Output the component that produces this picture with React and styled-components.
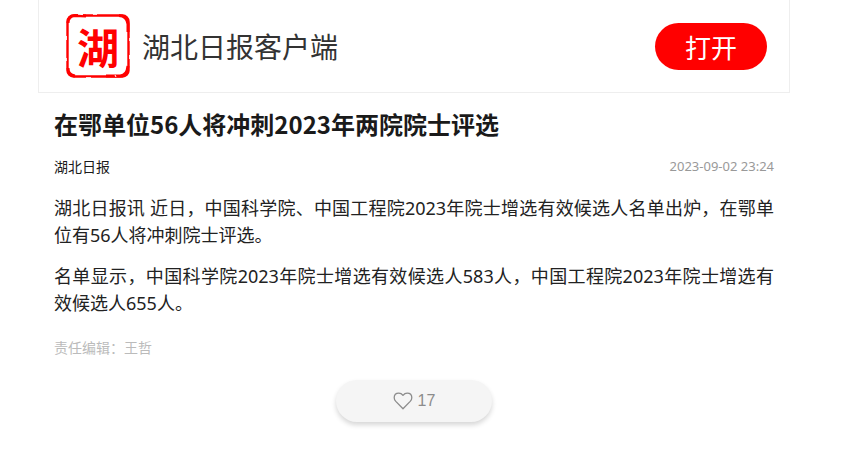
import React, { Component } from 'react';
import styled, { createGlobalStyle } from 'styled-components';

const article = {
	title: '在鄂单位56人将冲刺2023年两院院士评选',
	source: '湖北日报',
	date: '2023-09-02 23:24',
	editor: '责任编辑：王哲',
	likes: 17,
	paragraphs: [
		'湖北日报讯 近日，中国科学院、中国工程院2023年院士增选有效候选人名单出炉，在鄂单位有56人将冲刺院士评选。',
		'名单显示，中国科学院2023年院士增选有效候选人583人，中国工程院2023年院士增选有效候选人655人。'
	]
};

class Header extends Component {
	render() {
		return (
			<Bar>
				<Seal />
				<AppName>湖北日报客户端</AppName>
				<OpenButton type="button">打开</OpenButton>
			</Bar>
		);
	}
}

const Seal = () => (
	<SealBox>
		<SealFrame viewBox="0 0 64 64" aria-hidden="true">
			<rect x="1.5" y="1.5" width="61" height="61" rx="6" fill="none" stroke="#ff0000" strokeWidth="2.4" />
			<path
				d="M2 9 Q2 2 9 1.5 L20 2 M53 1.5 Q61 2 62 10 V18 M62 52 Q61 62 54 62 H40 M9 62 Q2 61 2 54"
				fill="none"
				stroke="#ff0000"
				strokeWidth="3"
			/>
			<path
				d="M12 .2 l5 .4 M27 .3 h4 M.4 22 v4 M.3 44 v3 M63.7 24 v3 M63.6 41 v4 M20 63.7 h5 M49 61 l1 2"
				fill="none"
				stroke="#fff"
				strokeWidth="1"
			/>
		</SealFrame>
		<SealText>湖</SealText>
	</SealBox>
);

class LikeButton extends Component {
	render() {
		return (
			<Like type="button" aria-label={ `点赞 ${ this.props.count }` }>
				<svg width="20" height="18" viewBox="0 0 20 18" aria-hidden="true">
					<path
						d="M10 3.4 C8.8 1.9 7.4 1.2 5.8 1.2 C3 1.2 1.2 3.1 1.2 5.7 C1.2 7.2 1.8 8.3 2.8 9.4 L10 16.8 L17.2 9.4 C18.2 8.3 18.8 7.2 18.8 5.7 C18.8 3.1 17 1.2 14.2 1.2 C12.6 1.2 11.2 1.9 10 3.4 Z"
						fill="none"
						stroke="#8c8c8c"
						strokeWidth="1.3"
						strokeLinejoin="round"
					/>
				</svg>
				<span>{this.props.count}</span>
			</Like>
		);
	}
}

class App extends Component {
	render() {
		return (
			<Page lang="zh-CN">
				<GlobalStyle />
				<Header />
				<Article>
					<Title>{article.title}</Title>
					<Meta>
						<Source>{article.source}</Source>
						<Time>{article.date}</Time>
					</Meta>
					{article.paragraphs.map(text => <Paragraph key={ text }>{text}</Paragraph>)}
					<Editor>{article.editor}</Editor>
					<LikeButton count={ article.likes } />
				</Article>
			</Page>
		);
	}
}

export default App;

const GlobalStyle = createGlobalStyle`
	* {
		box-sizing: border-box;
	}
	body {
		margin: 0;
		background: #fff;
		color: #1a1a1a;
		font-family: 'Noto Sans CJK SC', sans-serif;
	}
	button {
		border: 0;
		font-family: inherit;
		cursor: pointer;
	}
`;

const Page = styled.div`
	padding: 0 57px 0 38px;
`;

const Bar = styled.header`
	display: flex;
	align-items: center;
	padding: 14px 22px 14px 27px;
	border: 1px solid #eee;
	border-top: 0;
`;

const SealBox = styled.div`
	display: grid;
	place-items: center;
	width: 64px;
	height: 64px;
`;

const SealFrame = styled.svg`
	grid-area: 1 / 1;
	width: 100%;
	height: 100%;
`;

const SealText = styled.span`
	grid-area: 1 / 1;
	color: #ff0000;
	font-size: 42px;
	font-weight: 700;
	line-height: 48px;
`;

const AppName = styled.span`
	flex: 1;
	margin-left: 12px;
	color: #333;
	font-size: 28px;
	line-height: 40px;
`;

const OpenButton = styled.button`
	padding: 0 30px;
	border-radius: 24px;
	background: #ff0000;
	color: #fff;
	font-size: 26px;
	line-height: 47px;
`;

const Article = styled.main`
	display: flex;
	flex-direction: column;
	padding: 15px 16px;
`;

const Title = styled.h1`
	margin: 0;
	font-size: 24px;
	font-weight: 700;
	line-height: 32px;
`;

const Meta = styled.div`
	display: flex;
	justify-content: space-between;
	margin: 16px 0 19px;
	line-height: 20px;
`;

const Source = styled.span`
	font-size: 14px;
`;

const Time = styled.time`
	color: #999;
	font-family: 'Noto Sans', sans-serif;
	font-size: 13px;
`;

const Paragraph = styled.p`
	margin: 0 0 14px;
	color: #222;
	font-family: 'Noto Sans', 'Noto Sans CJK SC', sans-serif;
	font-size: 18px;
	line-height: 27px;
	text-align: justify;
`;

const Editor = styled.div`
	margin-top: 6px;
	color: #bbb;
	font-size: 14px;
	line-height: 20px;
`;

const Like = styled.button`
	display: flex;
	align-items: center;
	align-self: center;
	justify-content: center;
	gap: 5px;
	width: 156px;
	height: 42px;
	margin-top: 23px;
	border-radius: 21px;
	background: #f5f5f5;
	box-shadow: 0 3px 5px rgba(0, 0, 0, 0.16);
	color: #8c8c8c;
	font-family: 'Liberation Sans', sans-serif;
	font-size: 16px;
`;
